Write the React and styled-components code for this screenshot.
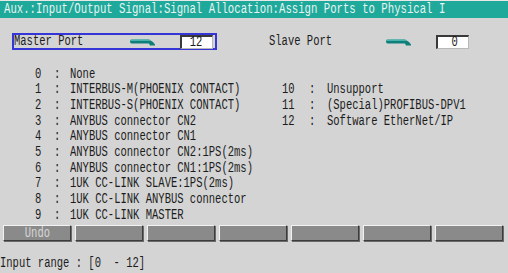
import styled, { createGlobalStyle } from "styled-components";

const Global = createGlobalStyle`
  html, body {
    margin: 0;
    padding: 0;
    background: #d4d4d4;
  }
  #root {
    width: 508px;
    height: 273px;
    overflow: hidden;
  }
`;

const leftItems = [
  ["0", "None"],
  ["1", "INTERBUS-M(PHOENIX CONTACT)"],
  ["2", "INTERBUS-S(PHOENIX CONTACT)"],
  ["3", "ANYBUS connector CN2"],
  ["4", "ANYBUS connector CN1"],
  ["5", "ANYBUS connector CN2:1PS(2ms)"],
  ["6", "ANYBUS connector CN1:1PS(2ms)"],
  ["7", "1UK CC-LINK SLAVE:1PS(2ms)"],
  ["8", "1UK CC-LINK ANYBUS connector"],
  ["9", "1UK CC-LINK MASTER"],
];

const rightItems = [
  ["10", "Unsupport"],
  ["11", "(Special)PROFIBUS-DPV1"],
  ["12", "Software EtherNet/IP"],
];

const buttons = ["Undo", "", "", "", "", "", ""];

function Arrow() {
  return (
    <svg width="26" height="8" viewBox="0 0 26 8">
      <path d="M1.5 1.5 H19 L23 4 L25 6.5 V7.5 H20 L19 5.5 H1.5 Q0 5.5 0 3.5 Q0 1.5 1.5 1.5 Z" fill="#0f7f7b" />
      <path d="M1.5 1.5 H19 L21 2.8 H2 Q1 2.8 0.6 3.6 Q0.4 1.5 1.5 1.5 Z" fill="#5cc3ba" />
    </svg>
  );
}

function App() {
  return (
    <Screen>
      <Global />
      <TitleBar>
        <Mono $sx={0.735}>Aux.:Input/Output Signal:Signal Allocation:Assign Ports to Physical I</Mono>
      </TitleBar>

      <PortRow>
        <MasterBox>
          <Label $w={116}>
            <Mono>Master Port</Mono>
          </Label>
          <ArrowSlot>
            <Arrow />
          </ArrowSlot>
          <ValueBox>
            <Mono $origin="right">12</Mono>
          </ValueBox>
        </MasterBox>
        <SlaveGroup>
          <Label $w={117}>
            <Mono>Slave Port</Mono>
          </Label>
          <ArrowSlot>
            <Arrow />
          </ArrowSlot>
          <ValueBox>
            <Mono $origin="right">0</Mono>
          </ValueBox>
        </SlaveGroup>
      </PortRow>

      <List>
        {leftItems.map(([n, t], i) => (
          <Row key={n} $col={1} $row={i + 1}>
            <Mono>{n}</Mono>
            <Mono>:</Mono>
            <Mono>{t}</Mono>
          </Row>
        ))}
        {rightItems.map(([n, t], i) => (
          <Row key={n} $col={2} $row={i + 2}>
            <Mono>{n}</Mono>
            <Mono>:</Mono>
            <Mono>{t}</Mono>
          </Row>
        ))}
      </List>

      <ButtonBar>
        {buttons.map((b, i) => (
          <FnButton key={i}>
            <Mono $origin="center">{b}</Mono>
          </FnButton>
        ))}
      </ButtonBar>

      <Footer>
        <Mono>Input range : [0  - 12]</Mono>
      </Footer>
    </Screen>
  );
}

const Screen = styled.div`
  width: 508px;
  height: 273px;
  background: #d4d4d4;
  color: #1c1c1c;
  display: flex;
  flex-direction: column;
  overflow: hidden;
`;

const Mono = styled.span`
  display: inline-block;
  font-family: "Liberation Mono", monospace;
  font-size: 14.5px;
  line-height: 1;
  white-space: pre;
  transform: scaleX(${(p) => p.$sx || 0.725});
  transform-origin: ${(p) => p.$origin || "left"} center;
`;

const TitleBar = styled.div`
  height: 17px;
  border-top: 1px solid #e8e8e8;
  background: #1fa99b;
  color: #e6f4f2;
  padding-left: 4px;
  display: flex;
  align-items: center;
  overflow: hidden;
`;

const PortRow = styled.div`
  margin-top: 15px;
  display: flex;
  align-items: center;
  height: 17px;
`;

const MasterBox = styled.div`
  margin-left: 12px;
  width: 201px;
  height: 13px;
  border: 2px solid #3636d6;
  display: flex;
  align-items: center;
`;

const SlaveGroup = styled.div`
  margin-left: 52px;
  display: flex;
  align-items: center;
`;

const Label = styled.div`
  width: ${(p) => p.$w}px;
  display: flex;
  align-items: center;
`;

const ArrowSlot = styled.div`
  width: 50px;
  display: flex;
  align-items: center;
  padding-top: 1px;
`;

const ValueBox = styled.div`
  width: 20px;
  height: 11px;
  background: #ffffff;
  border-top: 2px solid #3a3a3a;
  border-left: 2px solid #3a3a3a;
  border-bottom: 1px solid #b8b8b8;
  border-right: 1px solid #b8b8b8;
  display: flex;
  align-items: center;
  justify-content: flex-end;
  padding-right: 10px;
`;

const List = styled.div`
  margin-top: 16px;
  margin-left: 35px;
  display: grid;
  grid-template-columns: 247px auto;
  grid-template-rows: repeat(10, 15.7px);
`;

const Row = styled.div`
  grid-column: ${(p) => p.$col};
  grid-row: ${(p) => p.$row};
  display: grid;
  grid-template-columns: ${(p) => (p.$col === 1 ? "19px 16px" : "27px 18px")} auto;
  align-items: center;
`;

const ButtonBar = styled.div`
  margin-top: 2px;
  margin-left: 3px;
  display: flex;
  gap: 4px;
`;

const FnButton = styled.div`
  width: 66px;
  height: 14px;
  background: #8a8a8a;
  border-top: 1px solid #f2f2f2;
  border-left: 1px solid #f2f2f2;
  border-right: 1px solid #3c3c3c;
  border-bottom: 1px solid #3c3c3c;
  box-shadow: 1px 1px 0 #6a6a6a;
  color: #d6d6d6;
  display: flex;
  align-items: center;
  justify-content: center;
`;

const Footer = styled.div`
  margin-top: 14px;
  height: 16px;
  display: flex;
  align-items: center;
`;

export default App;
